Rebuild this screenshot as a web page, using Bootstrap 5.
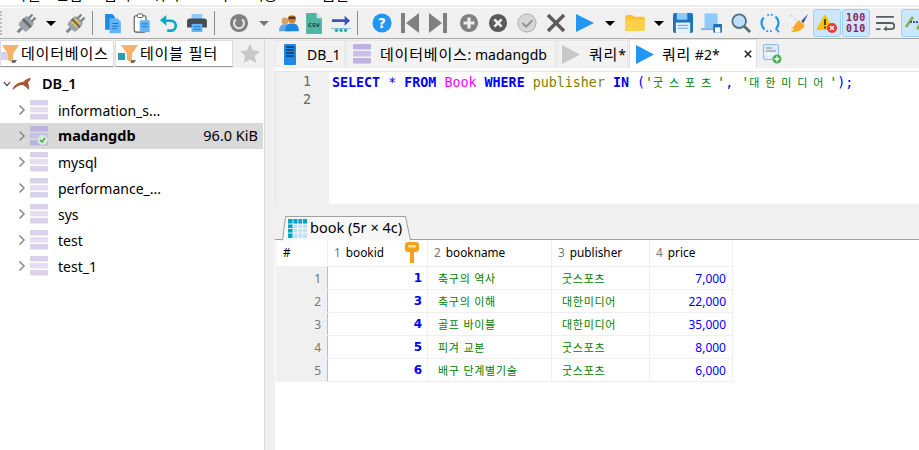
<!DOCTYPE html>
<html lang="ko">
<head>
<meta charset="UTF-8">
<meta name="viewport" content="width=device-width, initial-scale=1.0">
<title>HeidiSQL</title>
<link href="https://cdn.jsdelivr.net/npm/bootstrap@5.3.0/dist/css/bootstrap.min.css" rel="stylesheet">
<style>
    html, body { height: 450px; overflow: hidden; }
    body { font-family: "Noto Sans", "Noto Sans CJK KR", sans-serif; font-size: 14px; color: #000; background: #fff; }

    /* menu is cut off by the top of the window, only the feet of the letters show */
    .menu-strip { height: 3px; overflow: hidden; position: relative; background: #fff; }
    .menu-strip span { position: absolute; bottom: -1px; font-size: 15px; line-height: 20px; font-family: "Noto Sans CJK KR", sans-serif; }
    .m1 { left: 13px; } .m2 { left: 55px; } .m3 { left: 103px; } .m4 { left: 152px; }
    .m5 { left: 205px; } .m6 { left: 250px; } .m7 { left: 308px; }
    .menu-gap { height: 5px; background: linear-gradient(#fff 2px, #ececec 2px, #ececec 4px, #fff 4px); }

    .tool-bar { height: 31px; background: #f0f0f0; border-bottom: 1px solid #a9a9a9; padding-left: 12px; white-space: nowrap; position: relative; }
    .tool-bar::before { content: ""; position: absolute; left: 0; top: 3px; bottom: 3px; border-left: 2px dotted #bdbdbd; }
    .tb { flex: 0 0 28px; height: 28px; display: flex; align-items: center; justify-content: center; }
    .tb-n { flex-basis: 26px; }
    .tb-w { flex-basis: 29px; }
    .tb-c { flex-basis: 22px; }
    .tb-d { flex-basis: 19px; }
    .tb-on { background: #cde6fb; border: 1px solid #9fcdf3; border-radius: 3px; margin-right: 1px; }
    .tb-sep { flex: 0 0 1px; height: 24px; background: #8c8c8c; }
    .sa { margin: 0 6px 0 4px; }
    .sb { margin: 0 10px 0 3px; }
    .sc { margin: 0 9px 0 2px; }
    .ml-2px { margin-left: 2px; }
    .caret-dn { width: 0; height: 0; border-left: 5px solid transparent; border-right: 5px solid transparent; border-top: 5px solid #000; }
    .caret-gy { border-top-color: #777; }
    .bits { font: bold 10px/11px "DejaVu Sans Mono", monospace; color: #8e1d5c; text-align: center; letter-spacing: .6px; }

    .work-area { height: 411px; }
    .side-col { flex: 0 0 264px; width: 264px; }
    .split-v { flex: 0 0 11px; background: #f0f0f0; border-left: 1px solid #dcdcdc; }
    .main-col { min-width: 0; }

    .tab-strip { height: 29px; background: #f0f0f0; flex-wrap: nowrap; border: 0; }
    .tab-strip .nav-link { height: 27px; margin: 1px 1px 0 0; padding: 0; display: flex; align-items: center; color: #000; background: #f2f2f2; border: 1px solid #e6e6e6; border-bottom: 0; border-radius: 0; white-space: nowrap; font-family: "Noto Sans", "Noto Sans CJK KR", sans-serif; font-size: 14px; }
    .tab-strip .nav-link.active { background: #fff; height: 29px; margin-top: 0; border-color: #e2e2e2; }
    .ft1 { width: 114px; background: #fff !important; border-color: #ddd !important; border-bottom: 1px solid #999 !important; }
    .ft2 { width: 118px; background: #fff !important; border-color: #ddd !important; border-bottom: 1px solid #999 !important; }
    .ft-icon1 { margin-right: -2px; }
    .ft-star { width: 31px; justify-content: center; border: 0 !important; background: transparent !important; }
    .t-db { width: 70px; margin-left: -2px; padding-left: 8px !important; }
    .t-schema { width: 210px; padding-left: 6px !important; }
    .t-q1 { width: 71px; padding-left: 4px !important; }
    .t-q2 { width: 128px; padding-left: 6px !important; position: relative; }
    .t-plus { border: 0 !important; background: transparent !important; padding-left: 5px !important; }
    .gap-db { margin-right: 11px; }
    .gap-st { margin-right: 9px; }
    .kr { font-family: "Noto Sans CJK KR", sans-serif; font-size: 15px; letter-spacing: .8px; }

    .tree-list { padding-top: 3px; }
    .tree-row { height: 26px; padding: 0; border: 0; border-radius: 0 !important; display: flex; align-items: center; color: #000; font-size: 14px; background: transparent; }
    .tree-row.picked { background: #d9d9d9; margin-right: 1px; }
    .tree-root { padding-left: 3px; font-weight: 600; font-size: 14.5px; }
    .tree-child { padding-left: 18px; }
    .tree-name { margin-left: 10px; }
    .tree-strong { font-weight: 700; font-size: 14.5px; }
    .tree-size { margin-left: auto; margin-right: 5px; font-size: 14.5px; }
    .seal-ico { margin-left: 1px; }

    .sql-pane { height: 133px; margin-top: 3px; border-top: 1px solid #e4e4e4; border-left: 1px solid #e4e4e4; font: 13.33px/18px "DejaVu Sans Mono", monospace; }
    .sql-gutter { flex: 0 0 53px; background: #f0f0f0; color: #666; text-align: right; padding: 1px 18px 0 0; }
    .sql-code { padding: 1px 0 0 3px; white-space: pre; font-weight: 400; }
    .kw { color: #0000ff; font-weight: 700; }
    .tbl { color: #ff00ff; }
    .col-nm { color: #808000; }
    .str { color: #008000; }
    .pun { color: #0000ff; }
    .hg { display: inline-block; width: 16px; font: 11px/18px "Noto Sans CJK KR", sans-serif; color: #008000; text-align: left; }

    .split-h { height: 11px; background: #f0f0f0; }
    .res-tabs { height: 25px; background: #f0f0f0; border-bottom: 1px solid #a0a0a0; padding-left: 7px; }
    .res-tab { width: 130px; height: 24px; margin-top: 1px; position: relative; display: flex; align-items: center; padding-left: 6px; font-size: 14.5px; }
    .res-tab > svg.shape { position: absolute; left: 0; top: 0; }
    .res-tab > * { position: relative; }
    .res-tab-label { margin-left: 3px; }

    .grid-wrap { padding-left: 1px; }
    .res-grid { width: 456px; table-layout: fixed; margin: 0; border-collapse: collapse; font-size: 12px; }
    .res-grid th, .res-grid td { padding: 1px 6px 0; height: 23px; line-height: 21px; border: 1px solid #efefef; border-top: 0; box-shadow: none; white-space: nowrap; overflow: hidden; font-weight: 400; vertical-align: middle; }
    .res-grid th { height: 26px; padding-top: 0; color: #000; position: relative; border-top: 0; font-size: 11.8px; }
    .c0 { width: 51px; } .c1 { width: 100px; } .c2 { width: 124px; } .c3 { width: 98px; } .c4 { width: 83px; }
    .res-grid .hd-no { color: #777; margin-right: 2px; }
    .res-grid .rown { background: #f0f0f0; color: #777; text-align: right; border-right: 1px solid #a9c1e8; padding-right: 6px; }
    .res-grid .rid { color: #0000ff; font: bold 12px/21px "DejaVu Sans", sans-serif; text-align: right; padding-right: 5px; }
    .res-grid .rtx { color: #008000; font-family: "Noto Sans CJK KR", sans-serif; font-size: 11px; letter-spacing: .7px; padding-left: 10px; }
    .res-grid .rpr { color: #0000ff; text-align: right; }
    .key-ico { position: absolute; right: 8px; top: 2px; }
</style>
</head>
<body>
<svg class="d-none" xmlns="http://www.w3.org/2000/svg">
    <symbol id="dbstack" viewBox="0 0 18 20">
        <rect x="0" y="0" width="18" height="5.5" rx="1" fill="#d9d2ee"/>
        <rect x="0" y="7" width="18" height="5.5" rx="1" fill="#e3def2"/>
        <rect x="0" y="14" width="18" height="5.5" rx="1" fill="#d9d2ee"/>
    </symbol>
    <symbol id="dbstack2" viewBox="0 0 18 20">
        <rect x="0" y="0" width="18" height="5.5" rx="1" fill="#bdb2e0"/>
        <rect x="0" y="7" width="18" height="5.5" rx="1" fill="#c9c0e8"/>
        <rect x="0" y="14" width="18" height="5.5" rx="1" fill="#bdb2e0"/>
    </symbol>
    <symbol id="chev" viewBox="0 0 8 12">
        <path d="M1.5 1.5 6 6l-4.500 4.500" fill="none" stroke="#8a8a8a" stroke-width="1.5"/>
    </symbol>
    <symbol id="plug" viewBox="0 0 26 26">
        <g transform="rotate(45 13 13)">
            <rect x="7" y="7" width="12" height="13" rx="2.500" fill="#9aa4a9"/>
            <rect x="7" y="11" width="12" height="3" fill="#636d72"/>
            <rect x="9.500" y="2" width="2.500" height="6" fill="#7b868c"/>
            <rect x="14" y="2" width="2.500" height="6" fill="#7b868c"/>
            <rect x="11.500" y="20" width="3" height="6" fill="#7b868c"/>
        </g>
    </symbol>
    <symbol id="funnel" viewBox="0 0 22 22">
        <path d="M4 2h17l-6 9v9l-5-3v-6z" fill="#f6b26b"/>
        <path d="M14 20l3 0 2-3h-5z" fill="#6c6c6c"/>
    </symbol>
    <symbol id="circ" viewBox="0 0 22 22">
        <circle cx="11" cy="11" r="10" fill="#808080"/>
    </symbol>
</svg>

<div class="menu-strip">
    <span class="m1">파일</span><span class="m2">편집</span><span class="m3">검색</span><span class="m4">쿼리</span><span class="m5">도구</span><span class="m6">이동</span><span class="m7">도움말</span>
</div>
<div class="menu-gap"></div>

<div class="tool-bar d-flex align-items-center">
    <div class="tb"><svg width="25" height="25"><use href="#plug"/></svg></div>
    <div class="tb tb-c"><span class="caret-dn"></span></div>
    <div class="tb tb-n"><svg width="25" height="25" viewBox="0 0 26 26"><use href="#plug" width="26" height="26"/><path d="M9 11l6 6M12 8l6 6" stroke="#f2c230" stroke-width="2"/></svg></div>
    <div class="tb-sep sa"></div>

    <div class="tb"><svg width="18" height="21" viewBox="0 0 20 24"><path d="M1 1h8l3 3v15H1z" fill="#1e88e5"/><path d="M6 6h9l4 4v13H6z" fill="#64b5f6"/><path d="M9 12h7M9 15h7M9 18h5" stroke="#1565c0"/></svg></div>
    <div class="tb"><svg width="17" height="20" viewBox="0 0 18 22"><rect x="1" y="3" width="13" height="18" rx="2" fill="#fff" stroke="#555" stroke-width="1.2"/><rect x="4.500" y="1" width="6" height="4" rx="1" fill="#fff" stroke="#555"/><rect x="7" y="8" width="11" height="13" fill="#64b5f6"/><path d="M9 12h7M9 15h7" stroke="#1976d2"/></svg></div>
    <div class="tb"><svg width="20" height="18" viewBox="0 0 22 20"><path d="M8 1 1 7l7 6V9h5a4 4 0 0 1 0 8H9v3h4a7 7 0 0 0 0-14H8z" fill="#00acc1"/></svg></div>
    <div class="tb"><svg width="20" height="18" viewBox="0 0 22 20"><rect x="5" y="0" width="12" height="6" fill="#90caf9"/><path d="M3 5h16a3 3 0 0 1 3 3v7H0V8a3 3 0 0 1 3-3z" fill="#424c52"/><rect x="5" y="11" width="12" height="9" fill="#64b5f6"/><path d="M7 14h8M7 17h8" stroke="#1976d2"/></svg></div>
    <div class="tb-sep sb"></div>

    <div class="tb"><svg width="20" height="20" viewBox="0 0 22 22"><use href="#circ" width="22" height="22"/><path d="M14.500 7a5.500 5.500 0 1 1-7 0" fill="none" stroke="#e8e8e8" stroke-width="2.2"/></svg></div>
    <div class="tb tb-c"><span class="caret-dn caret-gy"></span></div>
    <div class="tb tb-n"><svg width="21" height="19" viewBox="0 0 24 22"><circle cx="8" cy="8" r="4" fill="#e0a060"/><path d="M1 20c0-6 3-8 7-8s7 2 7 8z" fill="#64a8e6"/><circle cx="16" cy="6" r="4.500" fill="#d9822b"/><path d="M12 3h8v3h-8z" fill="#5d3a1a"/><path d="M8 20c0-7 3-9 8-9s8 2 8 9z" fill="#1e88e5"/></svg></div>
    <div class="tb tb-n"><svg width="16" height="21" viewBox="0 0 18 24"><path d="M0 0h12l6 6v18H0z" fill="#4db6a0"/><path d="M12 0l6 6h-6z" fill="#c8ece4"/><text x="9" y="16" font-family="DejaVu Sans" font-weight="700" font-size="6" fill="#16443c" text-anchor="middle">CSV</text></svg></div>
    <div class="tb"><svg width="20" height="20" viewBox="0 0 22 22"><path d="M1 7h14V3l6 5.500-6 5.500v-4H1z" fill="#3f51b5"/><path d="M0 17h22" stroke="#7fb7d6"/><circle cx="6" cy="19" r="1.800" fill="#26a69a"/><circle cx="11" cy="19" r="1.800" fill="#26a69a"/><circle cx="16" cy="19" r="1.800" fill="#26a69a"/></svg></div>
    <div class="tb-sep sc"></div>

    <div class="tb tb-w"><svg width="20" height="20" viewBox="0 0 22 22"><circle cx="11" cy="11" r="10.500" fill="#2196f3"/><text x="11" y="16.500" font-family="DejaVu Sans" font-weight="700" font-size="15" fill="#fff" text-anchor="middle">?</text></svg></div>
    <div class="tb"><svg width="18" height="20" viewBox="0 0 18 20"><path d="M0 0h4v20H0zM18 0v20L5 10z" fill="#808080"/></svg></div>
    <div class="tb"><svg width="18" height="20" viewBox="0 0 18 20"><path d="M14 0h4v20h-4zM0 0v20l13-10z" fill="#808080"/></svg></div>
    <div class="tb tb-w ml-2px"><svg width="20" height="20" viewBox="0 0 22 22"><use href="#circ" width="22" height="22"/><path d="M11 5v12M5 11h12" stroke="#eee" stroke-width="3.500"/></svg></div>
    <div class="tb tb-w"><svg width="20" height="20" viewBox="0 0 22 22"><circle cx="11" cy="11" r="10" fill="#5a5a5a"/><path d="M7 7l8 8M15 7l-8 8" stroke="#eee" stroke-width="3"/></svg></div>
    <div class="tb tb-w"><svg width="20" height="20" viewBox="0 0 22 22"><circle cx="11" cy="11" r="10" fill="#d6d6d6" stroke="#a8a8a8"/><path d="M6 11l4 4 7-7" fill="none" stroke="#8e8e8e" stroke-width="2"/></svg></div>
    <div class="tb tb-w"><svg width="20" height="20" viewBox="0 0 20 20"><path d="M2 2l16 16M18 2 2 18" stroke="#5c5c5c" stroke-width="3.500"/></svg></div>
    <div class="tb tb-w"><svg width="20" height="20" viewBox="0 0 20 20"><path d="M1 1l18 9-18 9z" fill="#2196f3"/></svg></div>
    <div class="tb tb-c"><span class="caret-dn"></span></div>
    <div class="tb"><svg width="20" height="16" viewBox="0 0 22 18"><path d="M0 2a2 2 0 0 1 2-2h6l2 2h10a2 2 0 0 1 2 2v12a2 2 0 0 1-2 2H2a2 2 0 0 1-2-2z" fill="#ffc12e"/><path d="M0 5h22v11a2 2 0 0 1-2 2H2a2 2 0 0 1-2-2z" fill="#ffd04d"/></svg></div>
    <div class="tb tb-d"><span class="caret-dn"></span></div>
    <div class="tb tb-w"><svg width="20" height="20" viewBox="0 0 21 21"><rect width="21" height="21" rx="2" fill="#1e74bb"/><rect x="4" y="0" width="11" height="7" fill="#90caf9"/><rect x="3" y="10" width="15" height="11" fill="#e3f2fd"/><path d="M5 13h11M5 16h11" stroke="#64a0d0"/></svg></div>
    <div class="tb tb-w"><svg width="21" height="20" viewBox="0 0 24 22"><path d="M4 0h15v17H4z" fill="#90caf9"/><path d="M0 17h24v2H0z" fill="#64b5f6"/><rect x="14" y="12" width="10" height="10" rx="1" fill="#1e74bb"/><rect x="16" y="16" width="6" height="6" fill="#fff"/></svg></div>
    <div class="tb tb-w"><svg width="20" height="20" viewBox="0 0 22 22"><circle cx="9" cy="9" r="7.500" fill="#bbdefb" stroke="#546e7a" stroke-width="2"/><path d="M14.500 14.500 21 21" stroke="#546e7a" stroke-width="3"/></svg></div>
    <div class="tb tb-w"><svg width="20" height="20" viewBox="0 0 22 22"><path d="M5 18A9 9 0 0 1 4 5M17 4a9 9 0 0 1 1 13" fill="none" stroke="#2196f3" stroke-width="2.500"/><path d="M8 2h6M7 20h7" stroke="#2196f3" stroke-width="2" stroke-dasharray="2 2"/><path d="M21 21l-4-4" stroke="#2196f3" stroke-width="2"/></svg></div>
    <div class="tb tb-w"><svg width="21" height="23" viewBox="0 0 24 24"><path d="M23 1 15 9l2.500 3z" fill="#3f51b5"/><path d="M12 8l7 6c-2 5-8 8-16 8 3-2 4-4 4-5-1 1-3 1-4 1 4-2 6-6 9-10z" fill="#ffa726"/><circle cx="4" cy="3" r="1.500" fill="#b3e5fc"/><circle cx="8" cy="7" r="1.200" fill="#b3e5fc"/></svg></div>
    <div class="tb tb-on"><svg width="22" height="22" viewBox="0 0 22 22"><path d="M9 2 18 18H0z" fill="#ffc107"/><path d="M9 7v6M9 14.500v2" stroke="#333" stroke-width="1.800"/><circle cx="16" cy="16" r="5" fill="#e53935"/><path d="M14 14l4 4M18 14l-4 4" stroke="#fff" stroke-width="1.400"/></svg></div>
    <div class="tb tb-on"><div class="bits">100<br>010</div></div>
    <div class="tb"><svg width="20" height="16" viewBox="0 0 22 18"><path d="M1 2h20M1 9h17a3.500 3.500 0 0 1 0 7h-7M1 16h5" fill="none" stroke="#555e63" stroke-width="2"/><path d="M13 12l-4 4 4 2z" fill="#555e63"/></svg></div>
    <div class="tb tb-on ml-2px"><svg width="22" height="20" viewBox="0 0 22 20"><path d="M2 14 9 4M13 16l7-10" stroke="#7cb342" stroke-width="2.500"/><path d="M6 9h10" stroke="#3f51b5" stroke-width="2" stroke-dasharray="2 1"/></svg></div>
</div>

<div class="work-area d-flex">
    <div class="side-col d-flex flex-column">
        <ul class="nav nav-tabs tab-strip">
            <li class="nav-item"><a class="nav-link ft1" href="#"><svg class="ft-icon1" width="22" height="22"><rect x="0" y="9" width="8" height="8" fill="#d9d2ee"/><use href="#funnel" x="-3" width="22" height="22"/></svg><span class="kr">데이터베이스</span></a></li>
            <li class="nav-item"><a class="nav-link ft2" href="#"><svg width="24" height="22"><rect x="2" y="10" width="7" height="7" fill="#26a0b0"/><use href="#funnel" x="1" width="22" height="22"/></svg><span class="kr">테이블 필터</span></a></li>
            <li class="nav-item"><a class="nav-link ft-star" href="#"><svg width="20" height="19" viewBox="0 0 20 19"><path d="M10 0l3 6.500 7 .8-5.200 4.700 1.500 7L10 15.500 3.700 19l1.500-7L0 7.300l7-.8z" fill="#c8c8c8"/></svg></a></li>
        </ul>
        <div class="list-group tree-list">
            <a class="list-group-item tree-row tree-root" href="#">
                <svg width="8" height="8" viewBox="0 0 10 8"><path d="M1 1.500 5 6l4-4.500" fill="none" stroke="#333" stroke-width="1.400"/></svg>
                <svg class="seal-ico" width="20" height="14" viewBox="0 0 20 14"><path d="M0 13c2-5 6-8 11-8 2-2 5-4 8-4-1 2-1 3-3 4 1 3 1 6 1 8-3-3-5-5-7-5-4 0-6 3-10 5z" fill="#a5573a"/></svg>
                <span class="tree-name">DB_1</span>
            </a>
            <a class="list-group-item tree-row tree-child" href="#"><svg width="8" height="12"><use href="#chev"/></svg><svg class="ms-1" width="18" height="20"><use href="#dbstack"/></svg><span class="tree-name">information_s...</span></a>
            <a class="list-group-item tree-row tree-child picked" href="#"><svg width="8" height="12"><use href="#chev"/></svg><svg class="ms-1" width="18" height="20" viewBox="0 0 18 20"><use href="#dbstack2" width="18" height="20"/><circle cx="12.500" cy="14" r="5" fill="#d5ecd5"/><path d="M10 14l2 2 3-4" fill="none" stroke="#3aa03a" stroke-width="1.300"/></svg><span class="tree-name tree-strong">madangdb</span><span class="tree-size">96.0 KiB</span></a>
            <a class="list-group-item tree-row tree-child" href="#"><svg width="8" height="12"><use href="#chev"/></svg><svg class="ms-1" width="18" height="20"><use href="#dbstack"/></svg><span class="tree-name">mysql</span></a>
            <a class="list-group-item tree-row tree-child" href="#"><svg width="8" height="12"><use href="#chev"/></svg><svg class="ms-1" width="18" height="20"><use href="#dbstack"/></svg><span class="tree-name">performance_...</span></a>
            <a class="list-group-item tree-row tree-child" href="#"><svg width="8" height="12"><use href="#chev"/></svg><svg class="ms-1" width="18" height="20"><use href="#dbstack"/></svg><span class="tree-name">sys</span></a>
            <a class="list-group-item tree-row tree-child" href="#"><svg width="8" height="12"><use href="#chev"/></svg><svg class="ms-1" width="18" height="20"><use href="#dbstack"/></svg><span class="tree-name">test</span></a>
            <a class="list-group-item tree-row tree-child" href="#"><svg width="8" height="12"><use href="#chev"/></svg><svg class="ms-1" width="18" height="20"><use href="#dbstack"/></svg><span class="tree-name">test_1</span></a>
        </div>
    </div>
    <div class="split-v"></div>
    <div class="main-col flex-grow-1 d-flex flex-column">
        <ul class="nav nav-tabs tab-strip">
            <li class="nav-item"><a class="nav-link t-db" href="#"><svg class="gap-db" width="12" height="21" viewBox="0 0 12 21"><rect width="12" height="21" rx="1" fill="#1e88e5"/><path d="M2 3h8M2 6h8M2 9h8M2 12h8" stroke="#0d3c66" stroke-width="1.500"/></svg>DB_1</a></li>
            <li class="nav-item"><a class="nav-link t-schema" href="#"><svg class="gap-st" width="18" height="20"><use href="#dbstack2"/></svg><span class="kr">데이터베이스</span>: madangdb</a></li>
            <li class="nav-item"><a class="nav-link t-q1" href="#"><svg class="gap-st" width="18" height="19" viewBox="0 0 18 19"><path d="M0 0l18 9.500L0 19z" fill="#c8c8c8"/></svg><span class="kr">쿼리</span>*</a></li>
            <li class="nav-item"><a class="nav-link active t-q2" href="#"><svg class="me-2" width="18" height="19" viewBox="0 0 18 19"><path d="M0 0l18 9.500L0 19z" fill="#2196f3"/></svg><span class="kr">쿼리</span>&nbsp;#2*<svg class="position-absolute end-0 me-1" width="8" height="10" viewBox="0 0 10 10"><path d="M1 1l8 8M9 1 1 9" stroke="#222" stroke-width="1.900"/></svg></a></li>
            <li class="nav-item"><a class="nav-link t-plus" href="#"><svg width="19" height="20" viewBox="0 0 19 20"><rect x=".5" y=".5" width="15" height="15" rx="1" fill="#dbeafa" stroke="#8fb8de"/><path d="M3 4h6M3 7h10" stroke="#8a8a8a"/><path d="M1 10h14M6 8v7M11 8v7" stroke="#fff"/><circle cx="14" cy="15" r="4.500" fill="#4caf50"/><path d="M14 12.500v5M11.500 15h5" stroke="#fff" stroke-width="1.400"/></svg></a></li>
        </ul>
        <div class="sql-pane d-flex">
            <div class="sql-gutter">1<br>2</div>
            <div class="sql-code"><span class="kw">SELECT</span> <span class="pun">*</span> <span class="kw">FROM</span> <span class="tbl">Book</span> <span class="kw">WHERE</span> <span class="col-nm">publisher</span> <span class="kw">IN</span> <span class="pun">(</span><span class="str">'</span><span class="hg">굿</span><span class="hg">스</span><span class="hg">포</span><span class="hg">츠</span><span class="str">'</span><span class="pun">,</span> <span class="str">'</span><span class="hg">대</span><span class="hg">한</span><span class="hg">미</span><span class="hg">디</span><span class="hg">어</span><span class="str">'</span><span class="pun">);</span></div>
        </div>
        <div class="split-h"></div>
        <div class="res-tabs d-flex">
            <div class="res-tab">
                <svg class="shape" width="130" height="25" viewBox="0 0 130 25"><path d="M.5 24.500 3.500 .5h120l5 24" fill="#f7f7f7" stroke="#a0a0a0"/></svg>
                <svg width="19" height="19" viewBox="0 0 19 19"><rect width="19" height="19" fill="#bfe0f7"/><rect width="19" height="5" fill="#00a5c4"/><rect width="5" height="19" fill="#00a5c4"/><path d="M0 5h19M0 9.500h19M0 14h19M5 0v19M10 0v19M14.500 0v19" stroke="#fff" stroke-width=".8"/></svg>
                <span class="res-tab-label">book (5r × 4c)</span>
            </div>
        </div>
        <div class="grid-wrap">
            <table class="table res-grid">
                <colgroup><col class="c0"><col class="c1"><col class="c2"><col class="c3"><col class="c4"></colgroup>
                <thead>
                    <tr><th>#</th><th><span class="hd-no">1</span> bookid<svg class="key-ico" width="14" height="21" viewBox="0 0 14 21"><path d="M3 0h8a3 3 0 0 1 3 3v4a3 3 0 0 1-3 3H9v11H5V10H3a3 3 0 0 1-3-3V3a3 3 0 0 1 3-3z" fill="#f5a11c"/><rect x="3" y="3" width="8" height="2.500" rx="1" fill="#ffe3a6"/></svg></th><th><span class="hd-no">2</span> bookname</th><th><span class="hd-no">3</span> publisher</th><th><span class="hd-no">4</span> price</th></tr>
                </thead>
                <tbody>
                    <tr><td class="rown">1</td><td class="rid">1</td><td class="rtx">축구의 역사</td><td class="rtx">굿스포츠</td><td class="rpr">7,000</td></tr>
                    <tr><td class="rown">2</td><td class="rid">3</td><td class="rtx">축구의 이해</td><td class="rtx">대한미디어</td><td class="rpr">22,000</td></tr>
                    <tr><td class="rown">3</td><td class="rid">4</td><td class="rtx">골프 바이블</td><td class="rtx">대한미디어</td><td class="rpr">35,000</td></tr>
                    <tr><td class="rown">4</td><td class="rid">5</td><td class="rtx">피겨 교본</td><td class="rtx">굿스포츠</td><td class="rpr">8,000</td></tr>
                    <tr><td class="rown">5</td><td class="rid">6</td><td class="rtx">배구 단계별기술</td><td class="rtx">굿스포츠</td><td class="rpr">6,000</td></tr>
                </tbody>
            </table>
        </div>
    </div>
</div>
<script src="https://cdn.jsdelivr.net/npm/bootstrap@5.3.0/dist/js/bootstrap.bundle.min.js"></script>
</body>
</html>
